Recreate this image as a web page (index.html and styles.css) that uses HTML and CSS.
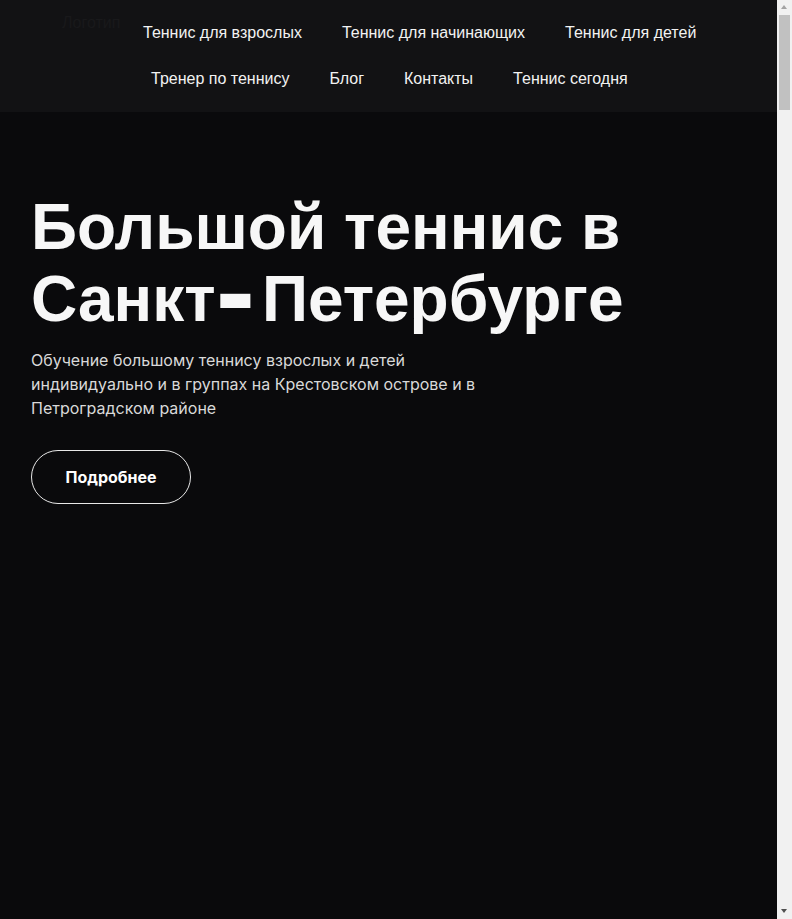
FILE: index.html
```
<!DOCTYPE html>
<html lang="ru">

<head>
    <meta charset="utf-8">
    <title>Большой теннис в Санкт-Петербурге</title>
    <link rel="stylesheet" href="styles.css">
</head>

<body>
    <header class="header">
        <a class="logo" href="#">Логотип</a>
        <nav class="nav">
            <ul class="nav-row">
                <li><a href="#">Теннис для взрослых</a></li>
                <li><a href="#">Теннис для начинающих</a></li>
                <li><a href="#">Теннис для детей</a></li>
            </ul>
            <ul class="nav-row nav-row-second">
                <li><a href="#">Тренер по теннису</a></li>
                <li><a href="#">Блог</a></li>
                <li><a href="#">Контакты</a></li>
                <li><a href="#">Теннис сегодня</a></li>
            </ul>
        </nav>
    </header>

    <main class="main">
        <section class="hero">
            <h1 class="hero-title">Большой теннис в Санкт<span class="dash">-</span>Петербурге</h1>
            <p class="hero-text">Обучение большому теннису взрослых и детей индивидуально и в группах на Крестовском острове и в Петроградском районе</p>
            <a class="hero-button" href="#">Подробнее</a>
        </section>
    </main>

    <!-- scrollbar of the window -->
    <div class="scrollbar" aria-hidden="true">
        <span class="scroll-arrow scroll-up"></span>
        <span class="scroll-thumb"></span>
        <span class="scroll-arrow scroll-down"></span>
    </div>
</body>

</html>
```

FILE: styles.css
```
html {
    font-family: 'Liberation Sans', Arial, sans-serif;
    background-color: #0a0a0c;
}

body {
    margin: 0;
    color: #f4f4f4;
}

a {
    color: inherit;
    text-decoration: none;
}

.header {
    display: flex;
    background-color: #121214;
    height: 112px;
    box-sizing: border-box;
    padding: 10px 15px 0 62px;
}

.logo {
    width: 81px;
    padding-top: 5px;
    font-size: 16px;
    line-height: 16px;
    color: #19191b;
}

.nav-row {
    display: flex;
    gap: 40px;
    list-style: none;
    margin: 0;
    padding: 0;
    height: 46px;
    align-items: center;
    font-size: 16px;
    color: #f2f2f2;
}

.nav-row-second {
    padding-left: 8px;
}

.main {
    min-height: 8500px;
    margin-right: 15px;
}

.hero {
    padding: 79px 31px 0;
}

.hero-title {
    margin: 0 0 13px;
    font-size: 64px;
    line-height: 72px;
    font-weight: 700;
    color: #f7f7f7;
}

.dash {
    font-size: 118px;
    line-height: 0;
    vertical-align: -11px;
    margin-right: 7px;
}

.hero-text {
    margin: 0 0 30px;
    width: 460px;
    font-family: Inter, 'Noto Sans', sans-serif;
    font-size: 16px;
    line-height: 24px;
    color: #d9d9d9;
}

.hero-button {
    display: inline-flex;
    justify-content: center;
    align-items: center;
    width: 160px;
    height: 54px;
    box-sizing: border-box;
    border: 1px solid #e8e8e8;
    border-radius: 27px;
    font-family: Inter, 'Noto Sans', sans-serif;
    font-size: 16px;
    font-weight: 700;
    color: #ffffff;
}

.scrollbar {
    position: fixed;
    top: 0;
    right: 0;
    width: 15px;
    height: 100vh;
    background-color: #f1f1f1;
}

.scroll-thumb {
    position: absolute;
    top: 15px;
    left: 2px;
    width: 11px;
    height: 95px;
    background-color: #c1c1c1;
}

.scroll-arrow {
    position: absolute;
    left: 4px;
    width: 0;
    height: 0;
    border-left: 3.5px solid transparent;
    border-right: 3.5px solid transparent;
}

.scroll-up {
    top: 5px;
    border-bottom: 4px solid #a3a3a3;
}

.scroll-down {
    bottom: 6px;
    border-top: 4px solid #505050;
}
```
